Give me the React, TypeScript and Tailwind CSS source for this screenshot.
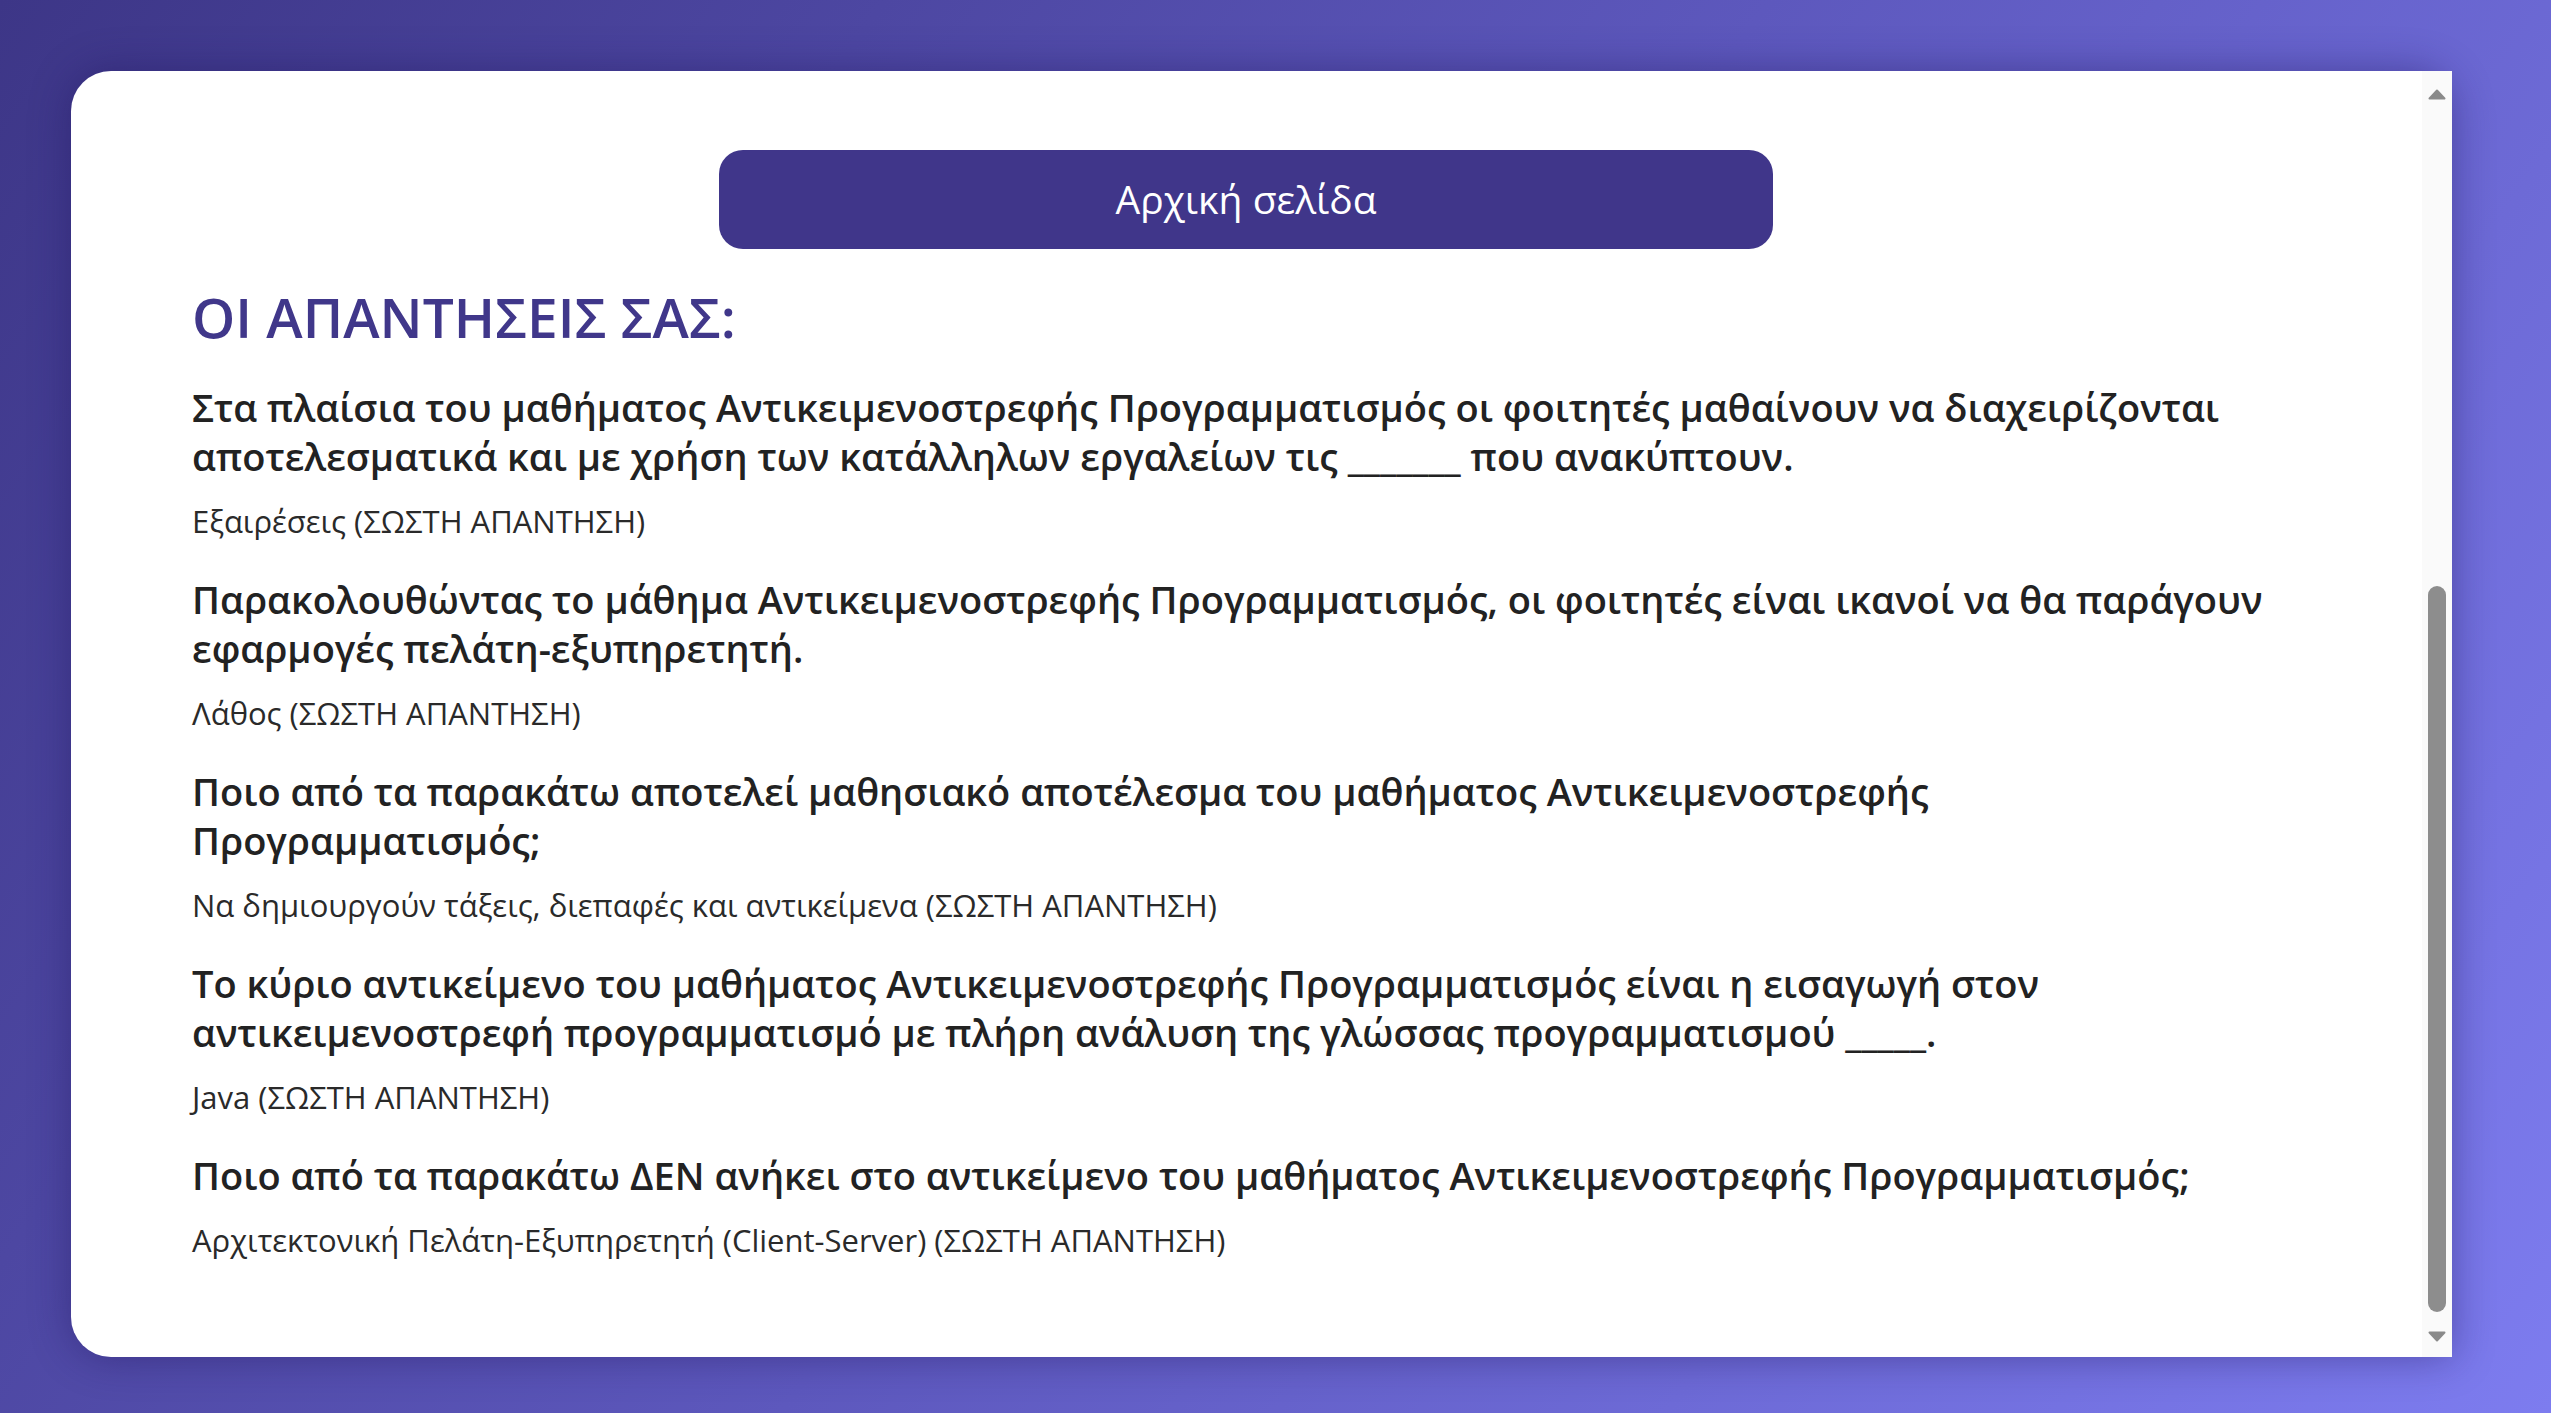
import React from "react";

type Answer = { question: string; answer: string };

const answers: Answer[] = [
  {
    question:
      "Στα πλαίσια του μαθήματος Αντικειμενοστρεφής Προγραμματισμός οι φοιτητές μαθαίνουν να διαχειρίζονται αποτελεσματικά και με χρήση των κατάλληλων εργαλείων τις _______ που ανακύπτουν.",
    answer: "Εξαιρέσεις (ΣΩΣΤΗ ΑΠΑΝΤΗΣΗ)",
  },
  {
    question:
      "Παρακολουθώντας το μάθημα Αντικειμενοστρεφής Προγραμματισμός, οι φοιτητές είναι ικανοί να θα παράγουν εφαρμογές πελάτη-εξυπηρετητή.",
    answer: "Λάθος (ΣΩΣΤΗ ΑΠΑΝΤΗΣΗ)",
  },
  {
    question:
      "Ποιο από τα παρακάτω αποτελεί μαθησιακό αποτέλεσμα του μαθήματος Αντικειμενοστρεφής Προγραμματισμός;",
    answer: "Να δημιουργούν τάξεις, διεπαφές και αντικείμενα (ΣΩΣΤΗ ΑΠΑΝΤΗΣΗ)",
  },
  {
    question:
      "Το κύριο αντικείμενο του μαθήματος Αντικειμενοστρεφής Προγραμματισμός είναι η εισαγωγή στον αντικειμενοστρεφή προγραμματισμό με πλήρη ανάλυση της γλώσσας προγραμματισμού _____.",
    answer: "Java (ΣΩΣΤΗ ΑΠΑΝΤΗΣΗ)",
  },
  {
    question:
      "Ποιο από τα παρακάτω ΔΕΝ ανήκει στο αντικείμενο του μαθήματος Αντικειμενοστρεφής Προγραμματισμός;",
    answer: "Αρχιτεκτονική Πελάτη-Εξυπηρετητή (Client-Server) (ΣΩΣΤΗ ΑΠΑΝΤΗΣΗ)",
  },
];

// ── Fake scrollbar (page is scrolled to the bottom) ───────────────────────────

function Scrollbar() {
  return (
    <div className="w-[30px] shrink-0 bg-[#fafafa] flex flex-col items-center">
      <div className="h-[44px] flex items-center justify-center pt-[2px]">
        <svg width="18" height="11" viewBox="0 0 18 11">
          <path d="M9 1.5 L16.5 9.5 L1.5 9.5 Z" fill="#8a8a8a" strokeLinejoin="round" stroke="#8a8a8a" strokeWidth="2" />
        </svg>
      </div>
      <div className="mt-[471px] h-[726px] w-[18px] rounded-full bg-[#8d8d8d]" />
      <div className="flex-1 flex items-end justify-center pb-[15px]">
        <svg width="18" height="11" viewBox="0 0 18 11">
          <path d="M1.5 1.5 L16.5 1.5 L9 9.5 Z" fill="#8a8a8a" strokeLinejoin="round" stroke="#8a8a8a" strokeWidth="2" />
        </svg>
      </div>
    </div>
  );
}

// ── Page ──────────────────────────────────────────────────────────────────────

export default function App() {
  return (
    <div
      className="w-full h-[1413px] bg-linear-[125deg] from-[#3d3687] via-[#5d58bd] to-[#7d7cef] pl-[71px] pt-[71px] overflow-hidden"
      style={{ fontFamily: '"Open Sans", "Noto Sans", sans-serif' }}
    >
      <div className="flex w-[2381px] h-[1286px] rounded-l-[40px] rounded-tr-[40px] shadow-[0_0_40px_rgba(30,20,90,0.45)]">
        {/* Content */}
        <div className="flex-1 bg-white rounded-l-[40px] pl-[121px] pr-[122px] pt-[79px]">
          <div className="flex justify-center">
            <button className="w-1/2 h-[99px] rounded-[24px] bg-[#40368a] text-white text-[39px]">
              Αρχική σελίδα
            </button>
          </div>

          <h1 className="mt-[35px] text-[55px] leading-[66px] font-semibold text-[#40378a]">
            ΟΙ ΑΠΑΝΤΗΣΕΙΣ ΣΑΣ:
          </h1>

          <div className="mt-[33px] max-w-[2080px] flex flex-col gap-[34px]">
            {answers.map((a, i) => (
              <div key={i}>
                <p className="text-[38px] leading-[49px] font-semibold text-[#222222]">
                  {a.question}
                </p>
                <p className="mt-[20px] text-[31px] leading-[40px] text-[#2a2a2a]">
                  {a.answer}
                </p>
              </div>
            ))}
          </div>
        </div>

        <Scrollbar />
      </div>
    </div>
  );
}
